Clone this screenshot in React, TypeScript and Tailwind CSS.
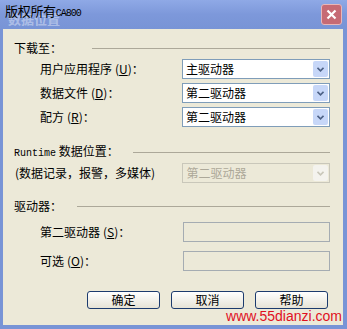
import React from "react";

const cjk = "font-['Noto_Sans_CJK_SC','Noto_Sans',sans-serif]";

function Chevron({ color }: { color: string }) {
  return (
    <svg width="7" height="5" viewBox="0 0 7 5">
      <path d="M0.5 0.8 L3.5 3.8 L6.5 0.8" fill="none" stroke={color} strokeWidth="1.6" />
    </svg>
  );
}

function Select({ value, disabled }: { value: string; disabled?: boolean }) {
  return (
    <div
      className={`flex h-[20px] w-[148px] items-center border ${
        disabled ? "border-[#c9c7ba] bg-[#ece9d8] text-[#aca899]" : "border-[#7f9db9] bg-white text-black"
      }`}
    >
      <span className="flex-1 pl-[3px] text-[12px] leading-none">{value}</span>
      <div
        className={`mr-[1px] flex h-[16px] w-[15px] items-center justify-center rounded-[2px] ${
          disabled ? "bg-[#f4f3ee]" : "bg-[#c7d7f8]"
        }`}
      >
        <Chevron color={disabled ? "#c9c7ba" : "#4d6185"} />
      </div>
    </div>
  );
}

function Header({ children, gap }: { children: React.ReactNode; gap: number }) {
  return (
    <div className="flex h-[14px] items-center">
      <span className="text-[12px] leading-none">{children}</span>
      <div className="h-px flex-1 bg-[#aca899]" style={{ marginLeft: gap }} />
    </div>
  );
}

function Key({ k }: { k: string }) {
  return (
    <span className="ml-[3px]">
      (<span className="underline">{k}</span>)：
    </span>
  );
}

function Row({ label, children }: { label: React.ReactNode; children: React.ReactNode }) {
  return (
    <div className="flex h-[20px] items-center">
      <div className="w-[168px] pl-[26px] text-[12px] leading-none">{label}</div>
      {children}
    </div>
  );
}

function Field() {
  return <div className="h-[20px] w-[148px] border border-[#a5acb2] bg-[#ece9d8]" />;
}

function Button({ label }: { label: string }) {
  return (
    <button className="h-[18px] w-[73px] rounded-[3px] border border-[#1c3b6e] bg-gradient-to-b from-white to-[#e6e3d6] text-[12px] leading-none text-black">
      {label}
    </button>
  );
}

export default function App() {
  return (
    <div className={`flex h-[329px] w-[347px] flex-col ${cjk} text-black`}>
      {/* title bar */}
      <div className="relative flex h-[29px] items-center bg-gradient-to-b from-[#8fa9e6] via-[#7d98da] to-[#7894d6] pl-[5px] pr-[5px]">
        <span className="absolute left-[8px] top-[12px] text-[13px] font-bold leading-none text-white/40">数据位置</span>
        <span className="relative -mt-[6px] text-[13px] leading-none tracking-[-0.3px]">
          版权所有<span className="font-['Liberation_Mono',monospace] text-[10px] tracking-[-1px]">CA800</span>
        </span>
        <div className="ml-auto flex h-[21px] w-[21px] items-center justify-center rounded-[3px] border border-[#e8b6b8] bg-[#c66a74]">
          <svg width="11" height="11" viewBox="0 0 11 11">
            <path d="M1.5 1.5 L9.5 9.5 M9.5 1.5 L1.5 9.5" stroke="white" strokeWidth="2.2" />
          </svg>
        </div>
      </div>

      {/* body */}
      <div className="relative flex flex-1 flex-col border-b-[4px] border-l-[3px] border-r-[4px] border-[#7894d6] bg-[#ece9d8] pl-[11px] pr-[13px]">
        <div className="mt-[12px]">
          <Header gap={30}>下载至：</Header>
        </div>
        <div className="mt-[4px] flex flex-col gap-[4px]">
          <Row label={<>用户应用程序<Key k="U" /></>}>
            <Select value="主驱动器" />
          </Row>
          <Row label={<>数据文件<Key k="D" /></>}>
            <Select value="第二驱动器" />
          </Row>
          <Row label={<>配方<Key k="R" /></>}>
            <Select value="第二驱动器" />
          </Row>
        </div>

        <div className="mt-[18px]">
          <Header gap={14}>
            <span className="font-['Liberation_Mono',monospace] text-[10px]">Runtime</span> 数据位置：
          </Header>
        </div>
        <div className="mt-[4px] flex h-[20px] items-center">
          <div className="w-[169px] pl-[1px] text-[12px] leading-none">(数据记录，报警，多媒体)</div>
          <Select value="第二驱动器" disabled />
        </div>

        <div className="mt-[16px]">
          <Header gap={15}>驱动器：</Header>
        </div>
        <div className="mt-[9px] flex flex-col gap-[9px]">
          <div className="flex h-[20px] items-center">
            <div className="w-[169px] pl-[26px] text-[12px] leading-none">
              第二驱动器<Key k="S" />
            </div>
            <Field />
          </div>
          <div className="flex h-[20px] items-center">
            <div className="w-[169px] pl-[26px] text-[12px] leading-none">
              可选<Key k="O" />
            </div>
            <Field />
          </div>
        </div>

        <div className="mr-[2px] mt-[20px] flex justify-end gap-[11px]">
          <Button label="确定" />
          <Button label="取消" />
          <Button label="帮助" />
        </div>

        <span className="absolute bottom-[2px] right-[1px] font-['Liberation_Sans',sans-serif] text-[14px] leading-none text-[#e0101e]">
          www.55dianzi.com
        </span>
      </div>
    </div>
  );
}
